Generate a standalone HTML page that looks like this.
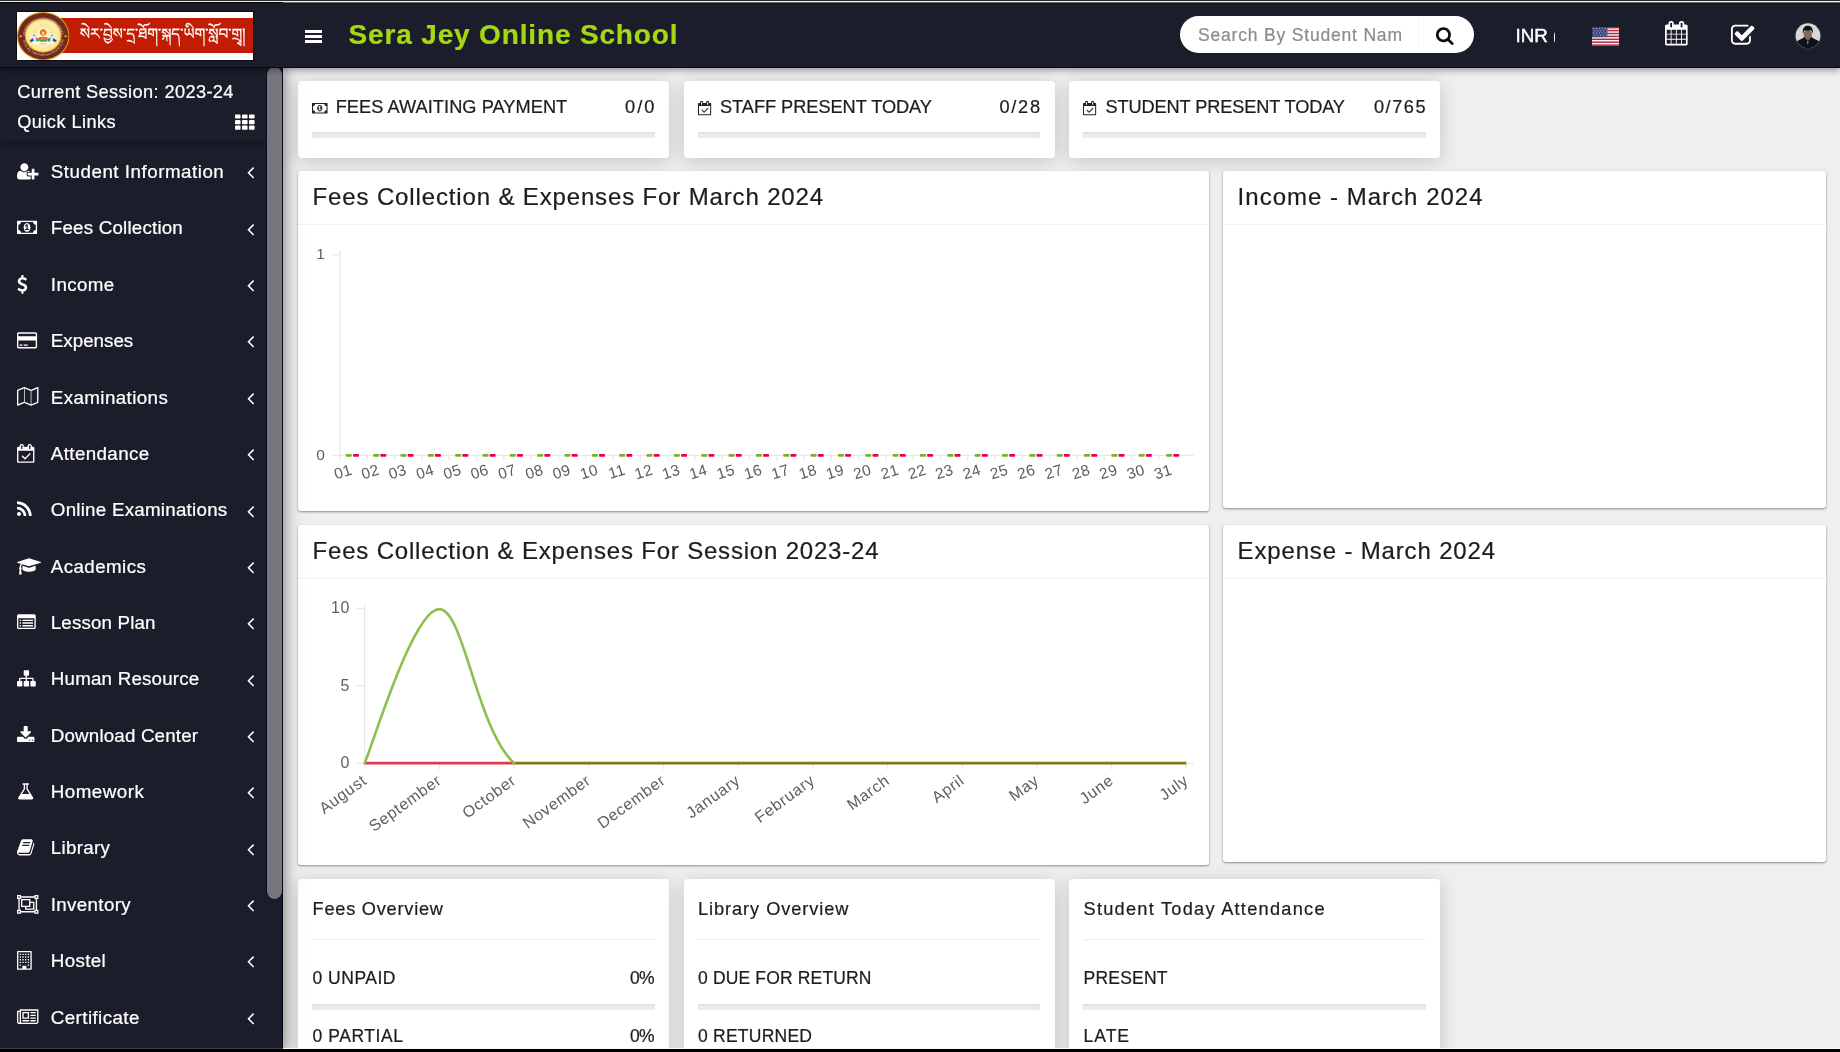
<!DOCTYPE html>
<html lang="en"><head><meta charset="utf-8"><title>Sera Jey Online School</title>
<style>
*{box-sizing:border-box}
html,body{margin:0;padding:0}
body{width:1840px;height:1052px;overflow:hidden;position:relative;background:#efefef;font-family:"Liberation Sans",sans-serif;color:#222}
.a{position:absolute}
.t{position:absolute;white-space:nowrap;line-height:1;margin:0;padding:0;-webkit-text-stroke:.22px}
.i{position:absolute;display:block;overflow:visible}
#hdr{left:0;top:0;width:1840px;height:68px;background:#1c1d2b;box-shadow:0 2px 7px rgba(0,0,0,.4),inset 0 -1px 0 #090912;z-index:5}
#side{left:0;top:68px;width:283px;height:984px;background:#1c1d2b;border-right:1px solid #060a1c;z-index:4;box-shadow:0 0 15px 1px rgba(0,0,0,.5)}
#sess{left:0;top:0;width:267px;height:73px;background:#1c1d2b;box-shadow:0 3px 5px rgba(0,0,0,.3)}
#thumb{left:267px;top:-0.6px;width:14.9px;height:831.6px;border-radius:8px;background:#76777d;box-shadow:-1px 0 0 #070b1d,1px 0 0 #070b1d}
.card{position:absolute;background:#fff;border-radius:4px}
.s1{box-shadow:0 3px 20px rgba(0,0,0,.18)}
.s2{box-shadow:0 1px 2.5px rgba(0,0,0,.42),0 0 1px rgba(0,0,0,.12)}
.pb{position:absolute;height:6px;background:#ececec;border-radius:1px;box-shadow:inset 0 1px 2px rgba(0,0,0,.08)}
.hr{position:absolute;height:1px;background:#f0f0f0}
svg text{font-family:"Liberation Sans",sans-serif}
#root{position:absolute;left:0;top:0;width:1840px;height:1052px;will-change:transform}

</style></head>
<body>
<div id="root">
<div class="a" style="left:0;top:0;width:1840px;height:1px;background:#303030;z-index:9"></div>
<div class="a" style="left:0;top:1px;width:1840px;height:1px;background:#ededed;z-index:9"></div>
<div class="a" style="left:0;top:2px;width:283px;height:1px;background:#000;z-index:9"></div>
<div class="a" style="left:283px;top:2px;width:1557px;height:1px;background:#6d6e76;z-index:9"></div>
<div class="a" style="left:283px;top:3px;width:1557px;height:1px;background:#0e0f1d;z-index:9"></div>
<div class="a" style="left:0;top:1048px;width:283px;height:1px;background:#3a3b4c;z-index:9"></div>
<div class="a" style="left:283px;top:1048px;width:1557px;height:1px;background:#fbfbfb;z-index:9"></div>
<div class="a" style="left:0;top:1049px;width:1840px;height:3px;background:#000;z-index:9"></div>
<div id="hdr" class="a">
<div class="a" style="left:16.5px;top:11.8px;width:236.7px;height:48.2px;background:#fff;overflow:hidden;box-shadow:0 0 0 1px #0c0c16">
<div class="a" style="left:30px;top:6px;width:207px;height:35px;background:#c01d04"></div>
<svg class="a" style="left:0.6px;top:-0.3px" width="52.4" height="48.4" viewBox="0 0 52 48" preserveAspectRatio="none"><defs><radialGradient id="eg" cx="50%" cy="45%" r="55%"><stop offset="0" stop-color="#fffbd0"/><stop offset="1" stop-color="#f8e68e"/></radialGradient><path id="arcb" d="M5.2 26.5 A18.9 18.9 0 0 0 42.8 26.5"/><path id="arct" d="M6.4 23 A17.7 17.7 0 0 1 41.6 23"/></defs><g transform="scale(1.0833,1)"><circle cx="24" cy="24" r="24" fill="#dd9a14"/><circle cx="24" cy="24" r="23" fill="#6e2a1f"/><circle cx="24" cy="23.4" r="16.9" fill="#e8a51c"/><circle cx="24" cy="23.4" r="15.8" fill="url(#eg)"/><text font-size="3.3" fill="#dcc0ae" font-family="'Liberation Serif',serif" font-style="italic" letter-spacing="0.05"><textPath href="#arcb" startOffset="3%">Sera Jey International Online School</textPath></text><path d="M6.4 23 A17.7 17.7 0 0 1 41.6 23" transform="translate(0,-0.6)" fill="none" stroke="#d8b9a6" stroke-width="2.2" stroke-dasharray="0.9 0.7" opacity=".75"/><path d="M1.6 24 L3.4 22.9 L5.2 24 L3.4 25.1 Z M42.8 24 L44.6 22.9 L46.4 24 L44.6 25.1 Z" fill="#e8a51c"/><path d="M17.89 20.42 L14.55 19.83 M18.43 18.78 L15.37 17.29 M19.39 17.35 L16.87 15.08 M20.71 16.24 L18.91 13.36 M22.29 15.54 L21.35 12.27 M24.00 15.30 L24.00 11.90 M25.71 15.54 L26.65 12.27 M27.29 16.24 L29.09 13.36 M28.61 17.35 L31.13 15.08 M29.57 18.78 L32.63 17.29 M30.11 20.42 L33.45 19.83 " stroke="#f5b04a" stroke-width="0.5" fill="none" opacity=".8"/><path d="M24 16.6 C25.2 17.6 27.3 18.2 27.2 20.6 C27.1 22.6 25.6 23.6 24 23.6 C22.4 23.6 20.9 22.6 20.8 20.6 C20.7 18.2 22.8 17.6 24 16.6 Z" fill="#f2701c"/><path d="M24 19 C24.8 19.8 25.5 20.3 25.4 21.4 C25.3 22.3 24.7 22.8 24 22.8 C23.3 22.8 22.7 22.3 22.6 21.4 C22.5 20.3 23.2 19.8 24 19 Z" fill="#fbd38a"/><g transform="translate(24,0) scale(1,1)"><path d="M-9.6 22.2 C-8 21.2 -6.2 21.8 -5.6 23.4 L-4.6 28.2 L-9.4 29.2 C-10.6 26.6 -10.8 24 -9.6 22.2 Z" fill="#eef1f4"/><path d="M-9.3 22.6 C-8.2 21.9 -7 22.2 -6.5 23.2 C-7.6 23.3 -8.6 23.8 -9.2 24.8 Z" fill="#8fa3b8"/><path d="M-12.6 28.8 L-9.6 25.8 L-8.6 28.6 L-10.6 29.8 Z" fill="#2a3aa6"/><path d="M-6.4 26.4 L-4.4 26 L-4 28.4 L-6.6 28.8 Z" fill="#2f8f3c"/><rect x="-7.4" y="25.2" width="1.4" height="1" fill="#d9662a"/><rect x="-5.9" y="29.3" width="1.5" height="1.2" fill="#1f2fd0"/><rect x="-10.6" y="29.6" width="2.6" height="1.1" fill="#f0b6c4"/></g><g transform="translate(24,0) scale(-1,1)"><path d="M-9.6 22.2 C-8 21.2 -6.2 21.8 -5.6 23.4 L-4.6 28.2 L-9.4 29.2 C-10.6 26.6 -10.8 24 -9.6 22.2 Z" fill="#eef1f4"/><path d="M-9.3 22.6 C-8.2 21.9 -7 22.2 -6.5 23.2 C-7.6 23.3 -8.6 23.8 -9.2 24.8 Z" fill="#8fa3b8"/><path d="M-12.6 28.8 L-9.6 25.8 L-8.6 28.6 L-10.6 29.8 Z" fill="#2a3aa6"/><path d="M-6.4 26.4 L-4.4 26 L-4 28.4 L-6.6 28.8 Z" fill="#2f8f3c"/><rect x="-7.4" y="25.2" width="1.4" height="1" fill="#d9662a"/><rect x="-5.9" y="29.3" width="1.5" height="1.2" fill="#1f2fd0"/><rect x="-10.6" y="29.6" width="2.6" height="1.1" fill="#f0b6c4"/></g><ellipse cx="24" cy="26.5" rx="4.3" ry="1.9" fill="#e5533a"/><ellipse cx="24" cy="26.5" rx="2.8" ry="0.9" fill="#f08a6c"/><path d="M20 28 H28 L27 29.4 H21 Z" fill="#2f8f3c"/><path d="M13.6 29.4 H34.4 L33.4 31.4 C30 32.6 18 32.6 14.6 31.4 Z" fill="#f7f7f7"/><rect x="21.6" y="31" width="4.8" height="1" fill="#f3a7b7"/></g></svg>
<span class="t" style="left:63.6px;top:7.2px;font-size:15.2px;color:#fff;font-family:'Liberation Sans','Noto Serif Tibetan','Jomolhari',serif;line-height:30px">སེར་བྱེས་དྲ་ཐོག་སྐད་ཡིག་སློབ་གྲྭ།</span>
</div>
<div class="a" style="left:304.5px;top:30.3px;width:17.5px;height:2.8px;background:#fff"></div>
<div class="a" style="left:304.5px;top:35.2px;width:17.5px;height:2.8px;background:#fff"></div>
<div class="a" style="left:304.5px;top:40.2px;width:17.5px;height:2.8px;background:#fff"></div>
<span class="t" style="left:348.50px;top:20.79px;font-size:28px;color:#a4d813;letter-spacing:0.846px;font-weight:700;">Sera Jey Online School</span>
<div class="a" style="left:1180px;top:15.8px;width:293.5px;height:37.5px;border-radius:19px;background:#fff"></div>
<div class="a" style="left:1417.5px;top:17px;width:1px;height:35px;background:#f7f7f7"></div>
<span class="t" style="left:1198.00px;top:27.18px;font-size:17.5px;color:#8c8c8c;letter-spacing:0.813px;">Search By Student Nam</span>
<svg class="i" style="width:17.64px;height:19.00px;left:1435.7px;top:25.9px" viewBox="0 -1536 1664 1792"><path fill="#0b0b0b" transform="scale(1,-1)" d="M1152 704C1152 457 951 256 704 256C457 256 256 457 256 704C256 951 457 1152 704 1152C951 1152 1152 951 1152 704ZM1664 -128C1664 -94 1650 -61 1627 -38L1284 305C1365 422 1408 562 1408 704C1408 1093 1093 1408 704 1408C315 1408 0 1093 0 704C0 315 315 0 704 0C846 0 986 43 1103 124L1446 -218C1469 -242 1502 -256 1536 -256C1606 -256 1664 -198 1664 -128Z"/></svg>
<div class="a" style="left:1515.5px;top:20px;width:39.8px;height:30px;overflow:hidden"><span class="t" style="left:0;top:7.32px;font-size:18.75px;color:#fff;-webkit-text-stroke:.45px">INR (</span></div>
<svg class="a" style="left:1592.1px;top:26.9px" width="27" height="18.8" viewBox="0 0 27 18.5" preserveAspectRatio="none"><rect width="27" height="18.5" fill="#f4f4f6"/><rect x="0" y="0.000" width="27" height="1.423" fill="#b02a3c"/><rect x="0" y="2.846" width="27" height="1.423" fill="#b02a3c"/><rect x="0" y="5.692" width="27" height="1.423" fill="#b02a3c"/><rect x="0" y="8.538" width="27" height="1.423" fill="#b02a3c"/><rect x="0" y="11.385" width="27" height="1.423" fill="#b02a3c"/><rect x="0" y="14.231" width="27" height="1.423" fill="#b02a3c"/><rect x="0" y="17.077" width="27" height="1.423" fill="#b02a3c"/><rect width="15.4" height="9.96" fill="#3b4478"/><rect x="1.0" y="1.0" width="1.2" height="1" fill="#a9aed0"/><rect x="3.9" y="1.0" width="1.2" height="1" fill="#a9aed0"/><rect x="6.8" y="1.0" width="1.2" height="1" fill="#a9aed0"/><rect x="9.7" y="1.0" width="1.2" height="1" fill="#a9aed0"/><rect x="12.6" y="1.0" width="1.2" height="1" fill="#a9aed0"/><rect x="2.2" y="3.2" width="1.2" height="1" fill="#a9aed0"/><rect x="5.1" y="3.2" width="1.2" height="1" fill="#a9aed0"/><rect x="8.0" y="3.2" width="1.2" height="1" fill="#a9aed0"/><rect x="10.9" y="3.2" width="1.2" height="1" fill="#a9aed0"/><rect x="13.8" y="3.2" width="1.2" height="1" fill="#a9aed0"/><rect x="1.0" y="5.4" width="1.2" height="1" fill="#a9aed0"/><rect x="3.9" y="5.4" width="1.2" height="1" fill="#a9aed0"/><rect x="6.8" y="5.4" width="1.2" height="1" fill="#a9aed0"/><rect x="9.7" y="5.4" width="1.2" height="1" fill="#a9aed0"/><rect x="12.6" y="5.4" width="1.2" height="1" fill="#a9aed0"/><rect x="2.2" y="7.6" width="1.2" height="1" fill="#a9aed0"/><rect x="5.1" y="7.6" width="1.2" height="1" fill="#a9aed0"/><rect x="8.0" y="7.6" width="1.2" height="1" fill="#a9aed0"/><rect x="10.9" y="7.6" width="1.2" height="1" fill="#a9aed0"/><rect x="13.8" y="7.6" width="1.2" height="1" fill="#a9aed0"/></svg>
<svg class="i" style="width:22.66px;height:24.40px;left:1665.2px;top:21.4px" viewBox="0 -1536 1664 1792"><path fill="#fff" transform="scale(1,-1)" d="M128 -128V160H416V-128ZM480 -128V160H800V-128ZM128 224V544H416V224ZM480 224V544H800V224ZM128 608V896H416V608ZM864 -128V160H1184V-128ZM480 608V896H800V608ZM1248 -128V160H1536V-128ZM864 224V544H1184V224ZM512 1088C512 1071 497 1056 480 1056H416C399 1056 384 1071 384 1088V1376C384 1393 399 1408 416 1408H480C497 1408 512 1393 512 1376V1088ZM1248 224V544H1536V224ZM864 608V896H1184V608ZM1248 608V896H1536V608ZM1280 1088C1280 1071 1265 1056 1248 1056H1184C1167 1056 1152 1071 1152 1088V1376C1152 1393 1167 1408 1184 1408H1248C1265 1408 1280 1393 1280 1376V1088ZM1664 1152C1664 1222 1606 1280 1536 1280H1408V1376C1408 1464 1336 1536 1248 1536H1184C1096 1536 1024 1464 1024 1376V1280H640V1376C640 1464 568 1536 480 1536H416C328 1536 256 1464 256 1376V1280H128C58 1280 0 1222 0 1152V-128C0 -198 58 -256 128 -256H1536C1606 -256 1664 -198 1664 -128Z"/></svg>
<svg class="i" style="width:23.49px;height:25.30px;left:1731.3px;top:23.3px" viewBox="0 -1536 1664 1792"><path fill="#fff" transform="scale(1,-1)" d="M1408 606C1408 619 1400 630 1388 635C1384 637 1380 638 1376 638C1368 638 1360 635 1353 628L1289 564C1283 558 1280 550 1280 542V288C1280 200 1208 128 1120 128H288C200 128 128 200 128 288V1120C128 1208 200 1280 288 1280H1120C1135 1280 1150 1278 1165 1274C1168 1273 1171 1272 1174 1272C1182 1272 1191 1276 1197 1282L1246 1331C1254 1339 1257 1349 1255 1360C1253 1370 1246 1379 1237 1383C1200 1400 1160 1408 1120 1408H288C129 1408 0 1279 0 1120V288C0 129 129 0 288 0H1120C1279 0 1408 129 1408 288ZM1639 1095C1671 1127 1671 1177 1639 1209L1529 1319C1497 1351 1447 1351 1415 1319L768 672L505 935C473 967 423 967 391 935L281 825C249 793 249 743 281 711L711 281C743 249 793 249 825 281L1639 1095Z"/></svg>
<svg class="a" style="left:1794.2px;top:21.6px" width="28" height="28" viewBox="0 0 28 28"><defs><clipPath id="av"><circle cx="14" cy="13.7" r="12.4"/></clipPath></defs><circle cx="14" cy="13.7" r="13.8" fill="#2a2a2d"/><g clip-path="url(#av)"><rect width="28" height="28" fill="#d5d7da"/><path d="M0 28 V21 C2.5 18.8 6 17.8 9.6 15.4 L11.4 14.6 H16.4 L18.2 15.4 C21.8 17.8 25.5 18.8 28 21 V28 Z" fill="#0e1115"/><path d="M11.6 14.2 H16.2 V17 L13.9 18.6 L11.6 17 Z" fill="#7a5d50"/><ellipse cx="13.8" cy="12.3" rx="4.15" ry="4.9" fill="#84675a"/><path d="M9.0 11.8 C6.6 1.4 20.6 0.8 18.8 11.6 C18.3 9.6 17.6 8.6 16.4 8.1 C14.4 8.9 11.4 8.6 10.4 8.3 C9.7 9.2 9.4 10.2 9.2 11.6 Z" fill="#101012"/><rect x="13.1" y="18.6" width="1.3" height="3.4" fill="#6f8494"/></g></svg>
</div>
<div id="side" class="a">
<div id="sess" class="a"></div>
<span class="t" style="left:17.20px;top:14.79px;font-size:18.2px;color:#fff;letter-spacing:0.393px;">Current Session: 2023-24</span>
<span class="t" style="left:17.20px;top:44.79px;font-size:18.2px;color:#fff;letter-spacing:0.448px;">Quick Links</span>
<svg class="i" style="width:19.60px;height:19.60px;left:235.2px;top:44.8px" viewBox="0 -1536 1792 1792"><path fill="#fff" transform="scale(1,-1)" d="M512 288C512 341 469 384 416 384H96C43 384 0 341 0 288V96C0 43 43 0 96 0H416C469 0 512 43 512 96ZM512 800C512 853 469 896 416 896H96C43 896 0 853 0 800V608C0 555 43 512 96 512H416C469 512 512 555 512 608ZM1152 288C1152 341 1109 384 1056 384H736C683 384 640 341 640 288V96C640 43 683 0 736 0H1056C1109 0 1152 43 1152 96ZM512 1312C512 1365 469 1408 416 1408H96C43 1408 0 1365 0 1312V1120C0 1067 43 1024 96 1024H416C469 1024 512 1067 512 1120ZM1152 800C1152 853 1109 896 1056 896H736C683 896 640 853 640 800V608C640 555 683 512 736 512H1056C1109 512 1152 555 1152 608ZM1792 288C1792 341 1749 384 1696 384H1376C1323 384 1280 341 1280 288V96C1280 43 1323 0 1376 0H1696C1749 0 1792 43 1792 96ZM1152 1312C1152 1365 1109 1408 1056 1408H736C683 1408 640 1365 640 1312V1120C640 1067 683 1024 736 1024H1056C1109 1024 1152 1067 1152 1120ZM1792 800C1792 853 1749 896 1696 896H1376C1323 896 1280 853 1280 800V608C1280 555 1323 512 1376 512H1696C1749 512 1792 555 1792 608ZM1792 1312C1792 1365 1749 1408 1696 1408H1376C1323 1408 1280 1365 1280 1312V1120C1280 1067 1323 1024 1376 1024H1696C1749 1024 1792 1067 1792 1120Z"/></svg>
<span class="t" style="left:50.80px;top:95.02px;font-size:18.75px;color:#fff;letter-spacing:0.519px;">Student Information</span>
<svg class="i" style="width:21.43px;height:18.75px;left:16.7px;top:94.00px" viewBox="0 -1536 2048 1792"><path fill="#fff" transform="scale(1,-1)" d="M704 640C916 640 1088 812 1088 1024C1088 1236 916 1408 704 1408C492 1408 320 1236 320 1024C320 812 492 640 704 640ZM1664 512V864C1664 881 1649 896 1632 896H1440C1423 896 1408 881 1408 864V512H1056C1039 512 1024 497 1024 480V288C1024 271 1039 256 1056 256H1408V-96C1408 -113 1423 -128 1440 -128H1632C1649 -128 1664 -113 1664 -96V256H2016C2033 256 2048 271 2048 288V480C2048 497 2033 512 2016 512ZM928 288V480C928 550 986 608 1056 608H1279C1222 672 1147 704 1062 704C1046 704 1035 697 1023 687C925 612 830 565 704 565C578 565 483 612 385 687C373 697 362 704 346 704C53 704 0 357 0 131C0 -32 107 -128 267 -128H1141C1201 -128 1263 -114 1312 -78V160H1056C986 160 928 218 928 288Z"/></svg>
<svg class="i" style="width:7.21px;height:20.20px;left:247.3px;top:94.30px" viewBox="0 -1536 640 1792"><path fill="#fff" transform="scale(1,-1)" d="M627 992C627 1001 623 1009 617 1015L567 1065C561 1071 552 1075 544 1075C536 1075 527 1071 521 1065L55 599C49 593 45 584 45 576C45 568 49 559 55 553L521 87C527 81 536 77 544 77C552 77 561 81 567 87L617 137C623 143 627 152 627 160C627 168 623 177 617 183L224 576L617 969C623 975 627 984 627 992Z"/></svg>
<span class="t" style="left:50.80px;top:151.39px;font-size:18.75px;color:#fff;letter-spacing:0.198px;">Fees Collection</span>
<svg class="i" style="width:20.09px;height:18.75px;left:16.7px;top:150.37px" viewBox="0 -1536 1920 1792"><path fill="#fff" transform="scale(1,-1)" d="M768 384V480H896V768H894C878 743 863 732 839 711L762 791L910 928H1024V480H1152V384ZM1280 640C1280 822 1170 1056 960 1056C750 1056 640 822 640 640C640 458 750 224 960 224C1170 224 1280 458 1280 640ZM1792 384C1651 384 1536 269 1536 128H384C384 269 269 384 128 384V896C269 896 384 1011 384 1152H1536C1536 1011 1651 896 1792 896V384ZM1920 1216C1920 1251 1891 1280 1856 1280H64C29 1280 0 1251 0 1216V64C0 29 29 0 64 0H1856C1891 0 1920 29 1920 64Z"/></svg>
<svg class="i" style="width:7.21px;height:20.20px;left:247.3px;top:150.67px" viewBox="0 -1536 640 1792"><path fill="#fff" transform="scale(1,-1)" d="M627 992C627 1001 623 1009 617 1015L567 1065C561 1071 552 1075 544 1075C536 1075 527 1071 521 1065L55 599C49 593 45 584 45 576C45 568 49 559 55 553L521 87C527 81 536 77 544 77C552 77 561 81 567 87L617 137C623 143 627 152 627 160C627 168 623 177 617 183L224 576L617 969C623 975 627 984 627 992Z"/></svg>
<span class="t" style="left:50.80px;top:207.76px;font-size:18.75px;color:#fff;letter-spacing:0.380px;">Income</span>
<svg class="i" style="width:10.71px;height:18.75px;left:16.7px;top:206.74px" viewBox="0 -1536 1024 1792"><path fill="#fff" transform="scale(1,-1)" d="M978 351C978 592 770 673 586 744C444 799 322 846 322 952C322 1043 410 1106 537 1106C687 1106 808 999 809 998C817 992 826 989 836 991C846 992 854 998 859 1007L940 1153C947 1165 945 1180 935 1191C931 1195 823 1305 620 1328V1504C620 1522 606 1536 588 1536H453C436 1536 421 1522 421 1504V1324C212 1284 68 1132 68 948C68 697 292 607 472 536C607 482 725 435 725 339C725 226 619 174 521 174C344 174 204 308 202 309C196 316 187 319 178 318C169 317 160 313 155 306L52 171C43 159 44 142 54 130C59 124 187 -16 421 -49V-224C421 -242 436 -256 453 -256H588C606 -256 620 -242 620 -224V-49C832 -14 978 147 978 351Z"/></svg>
<svg class="i" style="width:7.21px;height:20.20px;left:247.3px;top:207.04px" viewBox="0 -1536 640 1792"><path fill="#fff" transform="scale(1,-1)" d="M627 992C627 1001 623 1009 617 1015L567 1065C561 1071 552 1075 544 1075C536 1075 527 1071 521 1065L55 599C49 593 45 584 45 576C45 568 49 559 55 553L521 87C527 81 536 77 544 77C552 77 561 81 567 87L617 137C623 143 627 152 627 160C627 168 623 177 617 183L224 576L617 969C623 975 627 984 627 992Z"/></svg>
<span class="t" style="left:50.80px;top:264.13px;font-size:18.75px;color:#fff;letter-spacing:0.008px;">Expenses</span>
<svg class="i" style="width:20.09px;height:18.75px;left:16.7px;top:263.11px" viewBox="0 -1536 1920 1792"><path fill="#fff" transform="scale(1,-1)" d="M1760 1408H160C72 1408 0 1336 0 1248V32C0 -56 72 -128 160 -128H1760C1848 -128 1920 -56 1920 32V1248C1920 1336 1848 1408 1760 1408ZM160 1280H1760C1777 1280 1792 1265 1792 1248V1024H128V1248C128 1265 143 1280 160 1280ZM1760 0H160C143 0 128 15 128 32V640H1792V32C1792 15 1777 0 1760 0ZM256 128H512V256H256ZM640 128H1024V256H640Z"/></svg>
<svg class="i" style="width:7.21px;height:20.20px;left:247.3px;top:263.41px" viewBox="0 -1536 640 1792"><path fill="#fff" transform="scale(1,-1)" d="M627 992C627 1001 623 1009 617 1015L567 1065C561 1071 552 1075 544 1075C536 1075 527 1071 521 1065L55 599C49 593 45 584 45 576C45 568 49 559 55 553L521 87C527 81 536 77 544 77C552 77 561 81 567 87L617 137C623 143 627 152 627 160C627 168 623 177 617 183L224 576L617 969C623 975 627 984 627 992Z"/></svg>
<span class="t" style="left:50.80px;top:320.50px;font-size:18.75px;color:#fff;letter-spacing:0.403px;">Examinations</span>
<svg class="i" style="width:21.43px;height:18.75px;left:16.7px;top:319.48px" viewBox="0 -1536 2048 1792"><path fill="#fff" transform="scale(1,-1)" d="M2020 1525C2002 1537 1980 1539 1960 1531L1344 1285L728 1531C712 1538 696 1538 680 1531L40 1275C16 1266 0 1242 0 1216V-192C0 -213 11 -233 28 -245C39 -252 51 -256 64 -256C72 -256 80 -255 88 -251L704 -5L1320 -251C1336 -258 1352 -258 1368 -251L2008 5C2032 14 2048 38 2048 64V1472C2048 1493 2037 1513 2020 1525ZM736 1390 1312 1160V-110L736 120ZM128 1173 672 1390V120L128 -97ZM1920 107 1376 -110V1160L1920 1377Z"/></svg>
<svg class="i" style="width:7.21px;height:20.20px;left:247.3px;top:319.78px" viewBox="0 -1536 640 1792"><path fill="#fff" transform="scale(1,-1)" d="M627 992C627 1001 623 1009 617 1015L567 1065C561 1071 552 1075 544 1075C536 1075 527 1071 521 1065L55 599C49 593 45 584 45 576C45 568 49 559 55 553L521 87C527 81 536 77 544 77C552 77 561 81 567 87L617 137C623 143 627 152 627 160C627 168 623 177 617 183L224 576L617 969C623 975 627 984 627 992Z"/></svg>
<span class="t" style="left:50.80px;top:376.87px;font-size:18.75px;color:#fff;letter-spacing:0.392px;">Attendance</span>
<svg class="i" style="width:18.75px;height:18.75px;left:16.7px;top:375.85px" viewBox="0 -1536 1792 1792"><path fill="#fff" transform="scale(1,-1)" d="M1303 572C1315 585 1315 605 1303 617L1257 663C1245 675 1225 675 1212 663L768 219L548 439C535 451 515 451 503 439L457 393C445 381 445 361 457 348L745 60C758 48 778 48 791 60L1303 572ZM128 -128V896H1536V-128ZM512 1088C512 1070 498 1056 480 1056H416C398 1056 384 1070 384 1088V1376C384 1394 398 1408 416 1408H480C498 1408 512 1394 512 1376V1088ZM1280 1088C1280 1070 1266 1056 1248 1056H1184C1166 1056 1152 1070 1152 1088V1376C1152 1394 1166 1408 1184 1408H1248C1266 1408 1280 1394 1280 1376V1088ZM1664 1152C1664 1222 1606 1280 1536 1280H1408V1376C1408 1464 1336 1536 1248 1536H1184C1096 1536 1024 1464 1024 1376V1280H640V1376C640 1464 568 1536 480 1536H416C328 1536 256 1464 256 1376V1280H128C58 1280 0 1222 0 1152V-128C0 -198 58 -256 128 -256H1536C1606 -256 1664 -198 1664 -128Z"/></svg>
<svg class="i" style="width:7.21px;height:20.20px;left:247.3px;top:376.15px" viewBox="0 -1536 640 1792"><path fill="#fff" transform="scale(1,-1)" d="M627 992C627 1001 623 1009 617 1015L567 1065C561 1071 552 1075 544 1075C536 1075 527 1071 521 1065L55 599C49 593 45 584 45 576C45 568 49 559 55 553L521 87C527 81 536 77 544 77C552 77 561 81 567 87L617 137C623 143 627 152 627 160C627 168 623 177 617 183L224 576L617 969C623 975 627 984 627 992Z"/></svg>
<span class="t" style="left:50.80px;top:433.24px;font-size:18.75px;color:#fff;letter-spacing:0.246px;">Online Examinations</span>
<svg class="i" style="width:14.73px;height:18.75px;left:16.7px;top:432.22px" viewBox="0 -1536 1408 1792"><path fill="#fff" transform="scale(1,-1)" d="M384 192C384 298 298 384 192 384C86 384 0 298 0 192C0 86 86 0 192 0C298 0 384 86 384 192ZM896 69C879 282 786 483 634 634C483 786 282 879 69 896C67 896 66 896 64 896C48 896 32 890 21 879C7 867 0 850 0 832V697C0 664 25 637 58 634C363 605 605 363 634 58C637 25 664 0 697 0H832C850 0 867 7 879 21C891 34 897 51 896 69ZM1408 67C1390 417 1243 746 994 994C746 1243 417 1390 67 1408C66 1408 65 1408 64 1408C48 1408 32 1402 20 1390C7 1378 0 1362 0 1344V1201C0 1168 26 1140 60 1138C641 1104 1104 641 1137 60C1139 26 1167 0 1201 0H1344C1362 0 1378 7 1390 20C1403 33 1409 50 1408 67Z"/></svg>
<svg class="i" style="width:7.21px;height:20.20px;left:247.3px;top:432.52px" viewBox="0 -1536 640 1792"><path fill="#fff" transform="scale(1,-1)" d="M627 992C627 1001 623 1009 617 1015L567 1065C561 1071 552 1075 544 1075C536 1075 527 1071 521 1065L55 599C49 593 45 584 45 576C45 568 49 559 55 553L521 87C527 81 536 77 544 77C552 77 561 81 567 87L617 137C623 143 627 152 627 160C627 168 623 177 617 183L224 576L617 969C623 975 627 984 627 992Z"/></svg>
<span class="t" style="left:50.80px;top:489.61px;font-size:18.75px;color:#fff;letter-spacing:0.412px;">Academics</span>
<svg class="i" style="width:24.11px;height:18.75px;left:16.7px;top:488.59px" viewBox="0 -1536 2304 1792"><path fill="#fff" transform="scale(1,-1)" d="M1774 700 1200 519C1184 514 1168 512 1152 512C1136 512 1120 514 1104 519L530 700L512 384C504 243 799 128 1152 128C1505 128 1800 243 1792 384ZM2304 1024C2304 1038 2295 1050 2282 1055L1162 1407C1158 1408 1155 1408 1152 1408C1149 1408 1146 1408 1142 1407L22 1055C9 1050 0 1038 0 1024C0 1010 9 998 22 993L355 889C293 802 263 676 257 559C219 537 192 496 192 448C192 403 215 364 250 341L192 -92C191 -101 194 -110 200 -117C206 -124 215 -128 224 -128H416C425 -128 434 -124 440 -117C446 -110 449 -101 448 -92L390 341C425 364 448 403 448 448C448 495 423 535 385 557C393 692 433 802 490 847L1142 641C1146 640 1149 640 1152 640C1155 640 1158 640 1162 641L2282 993C2295 998 2304 1010 2304 1024Z"/></svg>
<svg class="i" style="width:7.21px;height:20.20px;left:247.3px;top:488.89px" viewBox="0 -1536 640 1792"><path fill="#fff" transform="scale(1,-1)" d="M627 992C627 1001 623 1009 617 1015L567 1065C561 1071 552 1075 544 1075C536 1075 527 1071 521 1065L55 599C49 593 45 584 45 576C45 568 49 559 55 553L521 87C527 81 536 77 544 77C552 77 561 81 567 87L617 137C623 143 627 152 627 160C627 168 623 177 617 183L224 576L617 969C623 975 627 984 627 992Z"/></svg>
<span class="t" style="left:50.80px;top:545.98px;font-size:18.75px;color:#fff;letter-spacing:0.150px;">Lesson Plan</span>
<svg class="i" style="width:18.75px;height:18.75px;left:16.7px;top:544.96px" viewBox="0 -1536 1792 1792"><path fill="#fff" transform="scale(1,-1)" d="M384 352C384 369 369 384 352 384H288C271 384 256 369 256 352V288C256 271 271 256 288 256H352C369 256 384 271 384 288ZM384 608C384 625 369 640 352 640H288C271 640 256 625 256 608V544C256 527 271 512 288 512H352C369 512 384 527 384 544ZM384 864C384 881 369 896 352 896H288C271 896 256 881 256 864V800C256 783 271 768 288 768H352C369 768 384 783 384 800ZM1536 352C1536 369 1521 384 1504 384H544C527 384 512 369 512 352V288C512 271 527 256 544 256H1504C1521 256 1536 271 1536 288ZM1536 608C1536 625 1521 640 1504 640H544C527 640 512 625 512 608V544C512 527 527 512 544 512H1504C1521 512 1536 527 1536 544ZM1536 864C1536 881 1521 896 1504 896H544C527 896 512 881 512 864V800C512 783 527 768 544 768H1504C1521 768 1536 783 1536 800ZM1664 160C1664 143 1649 128 1632 128H160C143 128 128 143 128 160V992C128 1009 143 1024 160 1024H1632C1649 1024 1664 1009 1664 992V160ZM1792 1248C1792 1336 1720 1408 1632 1408H160C72 1408 0 1336 0 1248V160C0 72 72 0 160 0H1632C1720 0 1792 72 1792 160Z"/></svg>
<svg class="i" style="width:7.21px;height:20.20px;left:247.3px;top:545.26px" viewBox="0 -1536 640 1792"><path fill="#fff" transform="scale(1,-1)" d="M627 992C627 1001 623 1009 617 1015L567 1065C561 1071 552 1075 544 1075C536 1075 527 1071 521 1065L55 599C49 593 45 584 45 576C45 568 49 559 55 553L521 87C527 81 536 77 544 77C552 77 561 81 567 87L617 137C623 143 627 152 627 160C627 168 623 177 617 183L224 576L617 969C623 975 627 984 627 992Z"/></svg>
<span class="t" style="left:50.80px;top:602.35px;font-size:18.75px;color:#fff;letter-spacing:0.200px;">Human Resource</span>
<svg class="i" style="width:18.75px;height:18.75px;left:16.7px;top:601.33px" viewBox="0 -1536 1792 1792"><path fill="#fff" transform="scale(1,-1)" d="M1792 288C1792 341 1749 384 1696 384H1600V576C1600 646 1542 704 1472 704H960V896H1056C1109 896 1152 939 1152 992V1312C1152 1365 1109 1408 1056 1408H736C683 1408 640 1365 640 1312V992C640 939 683 896 736 896H832V704H320C250 704 192 646 192 576V384H96C43 384 0 341 0 288V-32C0 -85 43 -128 96 -128H416C469 -128 512 -85 512 -32V288C512 341 469 384 416 384H320V576H832V384H736C683 384 640 341 640 288V-32C640 -85 683 -128 736 -128H1056C1109 -128 1152 -85 1152 -32V288C1152 341 1109 384 1056 384H960V576H1472V384H1376C1323 384 1280 341 1280 288V-32C1280 -85 1323 -128 1376 -128H1696C1749 -128 1792 -85 1792 -32Z"/></svg>
<svg class="i" style="width:7.21px;height:20.20px;left:247.3px;top:601.63px" viewBox="0 -1536 640 1792"><path fill="#fff" transform="scale(1,-1)" d="M627 992C627 1001 623 1009 617 1015L567 1065C561 1071 552 1075 544 1075C536 1075 527 1071 521 1065L55 599C49 593 45 584 45 576C45 568 49 559 55 553L521 87C527 81 536 77 544 77C552 77 561 81 567 87L617 137C623 143 627 152 627 160C627 168 623 177 617 183L224 576L617 969C623 975 627 984 627 992Z"/></svg>
<span class="t" style="left:50.80px;top:658.72px;font-size:18.75px;color:#fff;letter-spacing:0.166px;">Download Center</span>
<svg class="i" style="width:17.41px;height:18.75px;left:16.7px;top:657.70px" viewBox="0 -1536 1664 1792"><path fill="#fff" transform="scale(1,-1)" d="M1280 192C1280 157 1251 128 1216 128C1181 128 1152 157 1152 192C1152 227 1181 256 1216 256C1251 256 1280 227 1280 192ZM1536 192C1536 157 1507 128 1472 128C1437 128 1408 157 1408 192C1408 227 1437 256 1472 256C1507 256 1536 227 1536 192ZM1664 416C1664 469 1621 512 1568 512H1104L968 376C931 340 883 320 832 320C781 320 733 340 696 376L561 512H96C43 512 0 469 0 416V96C0 43 43 0 96 0H1568C1621 0 1664 43 1664 96ZM1339 985C1329 1008 1306 1024 1280 1024H1024V1472C1024 1507 995 1536 960 1536H704C669 1536 640 1507 640 1472V1024H384C358 1024 335 1008 325 985C315 961 320 933 339 915L787 467C799 454 816 448 832 448C848 448 865 454 877 467L1325 915C1344 933 1349 961 1339 985Z"/></svg>
<svg class="i" style="width:7.21px;height:20.20px;left:247.3px;top:658.00px" viewBox="0 -1536 640 1792"><path fill="#fff" transform="scale(1,-1)" d="M627 992C627 1001 623 1009 617 1015L567 1065C561 1071 552 1075 544 1075C536 1075 527 1071 521 1065L55 599C49 593 45 584 45 576C45 568 49 559 55 553L521 87C527 81 536 77 544 77C552 77 561 81 567 87L617 137C623 143 627 152 627 160C627 168 623 177 617 183L224 576L617 969C623 975 627 984 627 992Z"/></svg>
<span class="t" style="left:50.80px;top:715.09px;font-size:18.75px;color:#fff;letter-spacing:0.484px;">Homework</span>
<svg class="i" style="width:17.41px;height:18.75px;left:16.7px;top:714.07px" viewBox="0 -1536 1664 1792"><path fill="#fff" transform="scale(1,-1)" d="M1527 88 1024 881V1280H1088C1123 1280 1152 1309 1152 1344C1152 1379 1123 1408 1088 1408H576C541 1408 512 1379 512 1344C512 1309 541 1280 576 1280H640V881L137 88C62 -31 115 -128 256 -128H1408C1549 -128 1602 -31 1527 88ZM748 813 768 844V881V1280H896V881V844L916 813L1188 384H476Z"/></svg>
<svg class="i" style="width:7.21px;height:20.20px;left:247.3px;top:714.37px" viewBox="0 -1536 640 1792"><path fill="#fff" transform="scale(1,-1)" d="M627 992C627 1001 623 1009 617 1015L567 1065C561 1071 552 1075 544 1075C536 1075 527 1071 521 1065L55 599C49 593 45 584 45 576C45 568 49 559 55 553L521 87C527 81 536 77 544 77C552 77 561 81 567 87L617 137C623 143 627 152 627 160C627 168 623 177 617 183L224 576L617 969C623 975 627 984 627 992Z"/></svg>
<span class="t" style="left:50.80px;top:771.46px;font-size:18.75px;color:#fff;letter-spacing:0.281px;">Library</span>
<svg class="i" style="width:17.41px;height:18.75px;left:16.7px;top:770.44px" viewBox="0 -1536 1664 1792"><path fill="#fff" transform="scale(1,-1)" d="M1639 1058C1624 1078 1603 1092 1580 1101C1581 1083 1581 1063 1575 1044L1275 57C1264 21 1221 0 1184 0H261C206 0 137 12 117 70C109 92 110 101 118 113C127 125 143 128 156 128H1025C1152 128 1178 162 1225 316L1499 1222C1513 1269 1507 1316 1481 1352C1456 1387 1414 1408 1367 1408H606C589 1408 572 1403 555 1399L556 1402C429 1438 421 1301 379 1239C363 1216 339 1196 335 1177C332 1159 342 1142 340 1125C334 1072 294 977 270 944C255 924 233 914 226 891C220 875 230 852 228 831C223 784 188 695 161 649C151 631 132 617 127 598C122 581 132 559 127 540C116 488 82 407 52 357C36 330 15 313 11 289C9 277 18 264 17 248C16 224 12 204 10 184C-4 146 -4 102 12 57C49 -47 158 -128 260 -128H1183C1269 -128 1357 -62 1382 23L1657 929C1671 975 1664 1022 1639 1058ZM575 1056 596 1120C602 1138 621 1152 638 1152H1246C1264 1152 1274 1138 1268 1120L1247 1056C1241 1038 1222 1024 1205 1024H597C579 1024 569 1038 575 1056ZM492 800 513 864C519 882 538 896 555 896H1163C1181 896 1191 882 1185 864L1164 800C1158 782 1139 768 1122 768H514C496 768 486 782 492 800Z"/></svg>
<svg class="i" style="width:7.21px;height:20.20px;left:247.3px;top:770.74px" viewBox="0 -1536 640 1792"><path fill="#fff" transform="scale(1,-1)" d="M627 992C627 1001 623 1009 617 1015L567 1065C561 1071 552 1075 544 1075C536 1075 527 1071 521 1065L55 599C49 593 45 584 45 576C45 568 49 559 55 553L521 87C527 81 536 77 544 77C552 77 561 81 567 87L617 137C623 143 627 152 627 160C627 168 623 177 617 183L224 576L617 969C623 975 627 984 627 992Z"/></svg>
<span class="t" style="left:50.80px;top:827.83px;font-size:18.75px;color:#fff;letter-spacing:0.334px;">Inventory</span>
<svg class="i" style="width:21.43px;height:18.75px;left:16.7px;top:826.81px" viewBox="0 -1536 2048 1792"><path fill="#fff" transform="scale(1,-1)" d="M2048 1152V1536H1664V1408H384V1536H0V1152H128V128H0V-256H384V-128H1664V-256H2048V128H1920V1152ZM1792 1408H1920V1280H1792ZM128 1408H256V1280H128ZM256 -128H128V0H256ZM1664 0H384V128H256V1152H384V1280H1664V1152H1792V128H1664ZM1920 -128H1792V0H1920ZM1280 896V1152H384V384H768V128H1664V896ZM512 512V1024H1152V512ZM1536 256H896V384H1280V768H1536Z"/></svg>
<svg class="i" style="width:7.21px;height:20.20px;left:247.3px;top:827.11px" viewBox="0 -1536 640 1792"><path fill="#fff" transform="scale(1,-1)" d="M627 992C627 1001 623 1009 617 1015L567 1065C561 1071 552 1075 544 1075C536 1075 527 1071 521 1065L55 599C49 593 45 584 45 576C45 568 49 559 55 553L521 87C527 81 536 77 544 77C552 77 561 81 567 87L617 137C623 143 627 152 627 160C627 168 623 177 617 183L224 576L617 969C623 975 627 984 627 992Z"/></svg>
<span class="t" style="left:50.80px;top:884.20px;font-size:18.75px;color:#fff;letter-spacing:0.369px;">Hostel</span>
<svg class="i" style="width:14.73px;height:18.75px;left:16.7px;top:883.18px" viewBox="0 -1536 1408 1792"><path fill="#fff" transform="scale(1,-1)" d="M384 224C384 241 369 256 352 256H288C271 256 256 241 256 224V160C256 143 271 128 288 128H352C369 128 384 143 384 160ZM384 480C384 497 369 512 352 512H288C271 512 256 497 256 480V416C256 399 271 384 288 384H352C369 384 384 399 384 416ZM640 480C640 497 625 512 608 512H544C527 512 512 497 512 480V416C512 399 527 384 544 384H608C625 384 640 399 640 416ZM384 736C384 753 369 768 352 768H288C271 768 256 753 256 736V672C256 655 271 640 288 640H352C369 640 384 655 384 672ZM1152 224C1152 241 1137 256 1120 256H1056C1039 256 1024 241 1024 224V160C1024 143 1039 128 1056 128H1120C1137 128 1152 143 1152 160ZM896 480C896 497 881 512 864 512H800C783 512 768 497 768 480V416C768 399 783 384 800 384H864C881 384 896 399 896 416ZM640 736C640 753 625 768 608 768H544C527 768 512 753 512 736V672C512 655 527 640 544 640H608C625 640 640 655 640 672ZM384 992C384 1009 369 1024 352 1024H288C271 1024 256 1009 256 992V928C256 911 271 896 288 896H352C369 896 384 911 384 928ZM1152 480C1152 497 1137 512 1120 512H1056C1039 512 1024 497 1024 480V416C1024 399 1039 384 1056 384H1120C1137 384 1152 399 1152 416ZM896 736C896 753 881 768 864 768H800C783 768 768 753 768 736V672C768 655 783 640 800 640H864C881 640 896 655 896 672ZM640 992C640 1009 625 1024 608 1024H544C527 1024 512 1009 512 992V928C512 911 527 896 544 896H608C625 896 640 911 640 928ZM384 1248C384 1265 369 1280 352 1280H288C271 1280 256 1265 256 1248V1184C256 1167 271 1152 288 1152H352C369 1152 384 1167 384 1184ZM1152 736C1152 753 1137 768 1120 768H1056C1039 768 1024 753 1024 736V672C1024 655 1039 640 1056 640H1120C1137 640 1152 655 1152 672ZM896 992C896 1009 881 1024 864 1024H800C783 1024 768 1009 768 992V928C768 911 783 896 800 896H864C881 896 896 911 896 928ZM640 1248C640 1265 625 1280 608 1280H544C527 1280 512 1265 512 1248V1184C512 1167 527 1152 544 1152H608C625 1152 640 1167 640 1184ZM1152 992C1152 1009 1137 1024 1120 1024H1056C1039 1024 1024 1009 1024 992V928C1024 911 1039 896 1056 896H1120C1137 896 1152 911 1152 928ZM896 1248C896 1265 881 1280 864 1280H800C783 1280 768 1265 768 1248V1184C768 1167 783 1152 800 1152H864C881 1152 896 1167 896 1184ZM1152 1248C1152 1265 1137 1280 1120 1280H1056C1039 1280 1024 1265 1024 1248V1184C1024 1167 1039 1152 1056 1152H1120C1137 1152 1152 1167 1152 1184ZM896 -128V96C896 113 881 128 864 128H544C527 128 512 113 512 96V-128H128V1408H1280V-128ZM1408 1472C1408 1507 1379 1536 1344 1536H64C29 1536 0 1507 0 1472V-192C0 -227 29 -256 64 -256H1344C1379 -256 1408 -227 1408 -192Z"/></svg>
<svg class="i" style="width:7.21px;height:20.20px;left:247.3px;top:883.48px" viewBox="0 -1536 640 1792"><path fill="#fff" transform="scale(1,-1)" d="M627 992C627 1001 623 1009 617 1015L567 1065C561 1071 552 1075 544 1075C536 1075 527 1071 521 1065L55 599C49 593 45 584 45 576C45 568 49 559 55 553L521 87C527 81 536 77 544 77C552 77 561 81 567 87L617 137C623 143 627 152 627 160C627 168 623 177 617 183L224 576L617 969C623 975 627 984 627 992Z"/></svg>
<span class="t" style="left:50.80px;top:940.57px;font-size:18.75px;color:#fff;letter-spacing:0.419px;">Certificate</span>
<svg class="i" style="width:21.43px;height:18.75px;left:16.7px;top:939.55px" viewBox="0 -1536 2048 1792"><path fill="#fff" transform="scale(1,-1)" d="M1024 1024V640H640V1024H1024ZM1152 384H512V256H1152ZM1152 1152H512V512H1152ZM1792 384H1280V256H1792ZM1792 640H1280V512H1792ZM1792 896H1280V768H1792ZM1792 1152H1280V1024H1792ZM256 192C256 157 227 128 192 128C157 128 128 157 128 192V1152H256V192ZM1920 192C1920 157 1891 128 1856 128H373C380 148 384 170 384 192V1280H1920V192ZM2048 1408H256V1280H0V192C0 86 86 0 192 0H1856C1962 0 2048 86 2048 192Z"/></svg>
<svg class="i" style="width:7.21px;height:20.20px;left:247.3px;top:939.85px" viewBox="0 -1536 640 1792"><path fill="#fff" transform="scale(1,-1)" d="M627 992C627 1001 623 1009 617 1015L567 1065C561 1071 552 1075 544 1075C536 1075 527 1071 521 1065L55 599C49 593 45 584 45 576C45 568 49 559 55 553L521 87C527 81 536 77 544 77C552 77 561 81 567 87L617 137C623 143 627 152 627 160C627 168 623 177 617 183L224 576L617 969C623 975 627 984 627 992Z"/></svg>
<div id="thumb" class="a"></div>
</div>
<div class="card s1" style="left:298px;top:80.5px;width:371px;height:77.3px">
<svg class="i" style="width:15.54px;height:14.50px;left:14px;top:20.9px" viewBox="0 -1536 1920 1792"><path fill="#222" transform="scale(1,-1)" d="M768 384V480H896V768H894C878 743 863 732 839 711L762 791L910 928H1024V480H1152V384ZM1280 640C1280 822 1170 1056 960 1056C750 1056 640 822 640 640C640 458 750 224 960 224C1170 224 1280 458 1280 640ZM1792 384C1651 384 1536 269 1536 128H384C384 269 269 384 128 384V896C269 896 384 1011 384 1152H1536C1536 1011 1651 896 1792 896V384ZM1920 1216C1920 1251 1891 1280 1856 1280H64C29 1280 0 1251 0 1216V64C0 29 29 0 64 0H1856C1891 0 1920 29 1920 64Z"/></svg>
<span class="t" style="left:37.70px;top:17.69px;font-size:18.2px;color:#1d1d1d;letter-spacing:0.055px;">FEES AWAITING PAYMENT</span>
<span class="t" style="left:327.00px;top:17.69px;font-size:18.2px;color:#1d1d1d;letter-spacing:2.102px;">0/0</span>
<div class="pb" style="left:14px;top:51px;width:342.5px"></div>
</div>
<div class="card s1" style="left:683.5px;top:80.5px;width:371px;height:77.3px">
<svg class="i" style="width:14.20px;height:14.20px;left:14px;top:20.3px" viewBox="0 -1536 1792 1792"><path fill="#222" transform="scale(1,-1)" d="M1303 572C1315 585 1315 605 1303 617L1257 663C1245 675 1225 675 1212 663L768 219L548 439C535 451 515 451 503 439L457 393C445 381 445 361 457 348L745 60C758 48 778 48 791 60L1303 572ZM128 -128V896H1536V-128ZM512 1088C512 1070 498 1056 480 1056H416C398 1056 384 1070 384 1088V1376C384 1394 398 1408 416 1408H480C498 1408 512 1394 512 1376V1088ZM1280 1088C1280 1070 1266 1056 1248 1056H1184C1166 1056 1152 1070 1152 1088V1376C1152 1394 1166 1408 1184 1408H1248C1266 1408 1280 1394 1280 1376V1088ZM1664 1152C1664 1222 1606 1280 1536 1280H1408V1376C1408 1464 1336 1536 1248 1536H1184C1096 1536 1024 1464 1024 1376V1280H640V1376C640 1464 568 1536 480 1536H416C328 1536 256 1464 256 1376V1280H128C58 1280 0 1222 0 1152V-128C0 -198 58 -256 128 -256H1536C1606 -256 1664 -198 1664 -128Z"/></svg>
<span class="t" style="left:36.50px;top:17.69px;font-size:18.2px;color:#1d1d1d;letter-spacing:-0.032px;">STAFF PRESENT TODAY</span>
<span class="t" style="left:316.00px;top:17.69px;font-size:18.2px;color:#1d1d1d;letter-spacing:1.698px;">0/28</span>
<div class="pb" style="left:14px;top:51px;width:342.5px"></div>
</div>
<div class="card s1" style="left:1069px;top:80.5px;width:371px;height:77.3px">
<svg class="i" style="width:14.20px;height:14.20px;left:14px;top:20.3px" viewBox="0 -1536 1792 1792"><path fill="#222" transform="scale(1,-1)" d="M1303 572C1315 585 1315 605 1303 617L1257 663C1245 675 1225 675 1212 663L768 219L548 439C535 451 515 451 503 439L457 393C445 381 445 361 457 348L745 60C758 48 778 48 791 60L1303 572ZM128 -128V896H1536V-128ZM512 1088C512 1070 498 1056 480 1056H416C398 1056 384 1070 384 1088V1376C384 1394 398 1408 416 1408H480C498 1408 512 1394 512 1376V1088ZM1280 1088C1280 1070 1266 1056 1248 1056H1184C1166 1056 1152 1070 1152 1088V1376C1152 1394 1166 1408 1184 1408H1248C1266 1408 1280 1394 1280 1376V1088ZM1664 1152C1664 1222 1606 1280 1536 1280H1408V1376C1408 1464 1336 1536 1248 1536H1184C1096 1536 1024 1464 1024 1376V1280H640V1376C640 1464 568 1536 480 1536H416C328 1536 256 1464 256 1376V1280H128C58 1280 0 1222 0 1152V-128C0 -198 58 -256 128 -256H1536C1606 -256 1664 -198 1664 -128Z"/></svg>
<span class="t" style="left:36.50px;top:17.69px;font-size:18.2px;color:#1d1d1d;letter-spacing:-0.120px;">STUDENT PRESENT TODAY</span>
<span class="t" style="left:305.00px;top:17.69px;font-size:18.2px;color:#1d1d1d;letter-spacing:1.496px;">0/765</span>
<div class="pb" style="left:14px;top:51px;width:342.5px"></div>
</div>
<div class="card s2" style="left:298px;top:171px;width:911px;height:340px;border-radius:3px"><span class="t" style="left:14.60px;top:14.08px;font-size:24px;color:#1d1d1d;letter-spacing:0.857px;">Fees Collection &amp; Expenses For March 2024</span><div class="hr" style="left:0;top:53px;width:100%"></div><svg class="a" style="left:0;top:0" width="911" height="340" viewBox="298 171 911 340"><path d="M340.10 250.3 V460.6 M332.2 254.7 H340.10 M332.2 455.30 H1194" stroke="#e9e9e9" stroke-width="1.25" fill="none"/><path d="M367.39 455.30 V460.6 M394.68 455.30 V460.6 M421.97 455.30 V460.6 M449.26 455.30 V460.6 M476.55 455.30 V460.6 M503.84 455.30 V460.6 M531.13 455.30 V460.6 M558.42 455.30 V460.6 M585.71 455.30 V460.6 M613.00 455.30 V460.6 M640.29 455.30 V460.6 M667.58 455.30 V460.6 M694.87 455.30 V460.6 M722.16 455.30 V460.6 M749.45 455.30 V460.6 M776.74 455.30 V460.6 M804.03 455.30 V460.6 M831.32 455.30 V460.6 M858.61 455.30 V460.6 M885.90 455.30 V460.6 M913.19 455.30 V460.6 M940.48 455.30 V460.6 M967.77 455.30 V460.6 M995.06 455.30 V460.6 M1022.35 455.30 V460.6 M1049.64 455.30 V460.6 M1076.93 455.30 V460.6 M1104.22 455.30 V460.6 M1131.51 455.30 V460.6 M1158.80 455.30 V460.6 " stroke="#e9e9e9" stroke-width="1.25" fill="none"/><rect x="345.80" y="454.05" width="5.9" height="2.6" rx="0.6" fill="#7ab030"/><rect x="353.00" y="454.05" width="5.9" height="2.6" rx="0.6" fill="#e6004f"/><rect x="373.14" y="454.05" width="5.9" height="2.6" rx="0.6" fill="#7ab030"/><rect x="380.34" y="454.05" width="5.9" height="2.6" rx="0.6" fill="#e6004f"/><rect x="400.49" y="454.05" width="5.9" height="2.6" rx="0.6" fill="#7ab030"/><rect x="407.69" y="454.05" width="5.9" height="2.6" rx="0.6" fill="#e6004f"/><rect x="427.83" y="454.05" width="5.9" height="2.6" rx="0.6" fill="#7ab030"/><rect x="435.03" y="454.05" width="5.9" height="2.6" rx="0.6" fill="#e6004f"/><rect x="455.17" y="454.05" width="5.9" height="2.6" rx="0.6" fill="#7ab030"/><rect x="462.37" y="454.05" width="5.9" height="2.6" rx="0.6" fill="#e6004f"/><rect x="482.51" y="454.05" width="5.9" height="2.6" rx="0.6" fill="#7ab030"/><rect x="489.72" y="454.05" width="5.9" height="2.6" rx="0.6" fill="#e6004f"/><rect x="509.86" y="454.05" width="5.9" height="2.6" rx="0.6" fill="#7ab030"/><rect x="517.06" y="454.05" width="5.9" height="2.6" rx="0.6" fill="#e6004f"/><rect x="537.20" y="454.05" width="5.9" height="2.6" rx="0.6" fill="#7ab030"/><rect x="544.40" y="454.05" width="5.9" height="2.6" rx="0.6" fill="#e6004f"/><rect x="564.54" y="454.05" width="5.9" height="2.6" rx="0.6" fill="#7ab030"/><rect x="571.74" y="454.05" width="5.9" height="2.6" rx="0.6" fill="#e6004f"/><rect x="591.89" y="454.05" width="5.9" height="2.6" rx="0.6" fill="#7ab030"/><rect x="599.09" y="454.05" width="5.9" height="2.6" rx="0.6" fill="#e6004f"/><rect x="619.23" y="454.05" width="5.9" height="2.6" rx="0.6" fill="#7ab030"/><rect x="626.43" y="454.05" width="5.9" height="2.6" rx="0.6" fill="#e6004f"/><rect x="646.57" y="454.05" width="5.9" height="2.6" rx="0.6" fill="#7ab030"/><rect x="653.77" y="454.05" width="5.9" height="2.6" rx="0.6" fill="#e6004f"/><rect x="673.92" y="454.05" width="5.9" height="2.6" rx="0.6" fill="#7ab030"/><rect x="681.12" y="454.05" width="5.9" height="2.6" rx="0.6" fill="#e6004f"/><rect x="701.26" y="454.05" width="5.9" height="2.6" rx="0.6" fill="#7ab030"/><rect x="708.46" y="454.05" width="5.9" height="2.6" rx="0.6" fill="#e6004f"/><rect x="728.60" y="454.05" width="5.9" height="2.6" rx="0.6" fill="#7ab030"/><rect x="735.80" y="454.05" width="5.9" height="2.6" rx="0.6" fill="#e6004f"/><rect x="755.94" y="454.05" width="5.9" height="2.6" rx="0.6" fill="#7ab030"/><rect x="763.14" y="454.05" width="5.9" height="2.6" rx="0.6" fill="#e6004f"/><rect x="783.29" y="454.05" width="5.9" height="2.6" rx="0.6" fill="#7ab030"/><rect x="790.49" y="454.05" width="5.9" height="2.6" rx="0.6" fill="#e6004f"/><rect x="810.63" y="454.05" width="5.9" height="2.6" rx="0.6" fill="#7ab030"/><rect x="817.83" y="454.05" width="5.9" height="2.6" rx="0.6" fill="#e6004f"/><rect x="837.97" y="454.05" width="5.9" height="2.6" rx="0.6" fill="#7ab030"/><rect x="845.17" y="454.05" width="5.9" height="2.6" rx="0.6" fill="#e6004f"/><rect x="865.32" y="454.05" width="5.9" height="2.6" rx="0.6" fill="#7ab030"/><rect x="872.52" y="454.05" width="5.9" height="2.6" rx="0.6" fill="#e6004f"/><rect x="892.66" y="454.05" width="5.9" height="2.6" rx="0.6" fill="#7ab030"/><rect x="899.86" y="454.05" width="5.9" height="2.6" rx="0.6" fill="#e6004f"/><rect x="920.00" y="454.05" width="5.9" height="2.6" rx="0.6" fill="#7ab030"/><rect x="927.20" y="454.05" width="5.9" height="2.6" rx="0.6" fill="#e6004f"/><rect x="947.35" y="454.05" width="5.9" height="2.6" rx="0.6" fill="#7ab030"/><rect x="954.55" y="454.05" width="5.9" height="2.6" rx="0.6" fill="#e6004f"/><rect x="974.69" y="454.05" width="5.9" height="2.6" rx="0.6" fill="#7ab030"/><rect x="981.89" y="454.05" width="5.9" height="2.6" rx="0.6" fill="#e6004f"/><rect x="1002.03" y="454.05" width="5.9" height="2.6" rx="0.6" fill="#7ab030"/><rect x="1009.23" y="454.05" width="5.9" height="2.6" rx="0.6" fill="#e6004f"/><rect x="1029.38" y="454.05" width="5.9" height="2.6" rx="0.6" fill="#7ab030"/><rect x="1036.58" y="454.05" width="5.9" height="2.6" rx="0.6" fill="#e6004f"/><rect x="1056.72" y="454.05" width="5.9" height="2.6" rx="0.6" fill="#7ab030"/><rect x="1063.92" y="454.05" width="5.9" height="2.6" rx="0.6" fill="#e6004f"/><rect x="1084.06" y="454.05" width="5.9" height="2.6" rx="0.6" fill="#7ab030"/><rect x="1091.26" y="454.05" width="5.9" height="2.6" rx="0.6" fill="#e6004f"/><rect x="1111.40" y="454.05" width="5.9" height="2.6" rx="0.6" fill="#7ab030"/><rect x="1118.60" y="454.05" width="5.9" height="2.6" rx="0.6" fill="#e6004f"/><rect x="1138.75" y="454.05" width="5.9" height="2.6" rx="0.6" fill="#7ab030"/><rect x="1145.95" y="454.05" width="5.9" height="2.6" rx="0.6" fill="#e6004f"/><rect x="1166.09" y="454.05" width="5.9" height="2.6" rx="0.6" fill="#7ab030"/><rect x="1173.29" y="454.05" width="5.9" height="2.6" rx="0.6" fill="#e6004f"/><g font-size="15.5" fill="#5f5f5f" letter-spacing="0.3"><text x="325.2" y="259.1" text-anchor="end">1</text><text x="325.2" y="459.8" text-anchor="end">0</text><text text-anchor="end" y="5.5" transform="translate(351.35,468.9) rotate(-17)">01</text><text text-anchor="end" y="5.5" transform="translate(378.68,468.9) rotate(-17)">02</text><text text-anchor="end" y="5.5" transform="translate(406.02,468.9) rotate(-17)">03</text><text text-anchor="end" y="5.5" transform="translate(433.36,468.9) rotate(-17)">04</text><text text-anchor="end" y="5.5" transform="translate(460.70,468.9) rotate(-17)">05</text><text text-anchor="end" y="5.5" transform="translate(488.04,468.9) rotate(-17)">06</text><text text-anchor="end" y="5.5" transform="translate(515.37,468.9) rotate(-17)">07</text><text text-anchor="end" y="5.5" transform="translate(542.71,468.9) rotate(-17)">08</text><text text-anchor="end" y="5.5" transform="translate(570.05,468.9) rotate(-17)">09</text><text text-anchor="end" y="5.5" transform="translate(597.39,468.9) rotate(-17)">10</text><text text-anchor="end" y="5.5" transform="translate(624.73,468.9) rotate(-17)">11</text><text text-anchor="end" y="5.5" transform="translate(652.06,468.9) rotate(-17)">12</text><text text-anchor="end" y="5.5" transform="translate(679.40,468.9) rotate(-17)">13</text><text text-anchor="end" y="5.5" transform="translate(706.74,468.9) rotate(-17)">14</text><text text-anchor="end" y="5.5" transform="translate(734.08,468.9) rotate(-17)">15</text><text text-anchor="end" y="5.5" transform="translate(761.41,468.9) rotate(-17)">16</text><text text-anchor="end" y="5.5" transform="translate(788.75,468.9) rotate(-17)">17</text><text text-anchor="end" y="5.5" transform="translate(816.09,468.9) rotate(-17)">18</text><text text-anchor="end" y="5.5" transform="translate(843.43,468.9) rotate(-17)">19</text><text text-anchor="end" y="5.5" transform="translate(870.77,468.9) rotate(-17)">20</text><text text-anchor="end" y="5.5" transform="translate(898.11,468.9) rotate(-17)">21</text><text text-anchor="end" y="5.5" transform="translate(925.44,468.9) rotate(-17)">22</text><text text-anchor="end" y="5.5" transform="translate(952.78,468.9) rotate(-17)">23</text><text text-anchor="end" y="5.5" transform="translate(980.12,468.9) rotate(-17)">24</text><text text-anchor="end" y="5.5" transform="translate(1007.46,468.9) rotate(-17)">25</text><text text-anchor="end" y="5.5" transform="translate(1034.80,468.9) rotate(-17)">26</text><text text-anchor="end" y="5.5" transform="translate(1062.13,468.9) rotate(-17)">27</text><text text-anchor="end" y="5.5" transform="translate(1089.47,468.9) rotate(-17)">28</text><text text-anchor="end" y="5.5" transform="translate(1116.81,468.9) rotate(-17)">29</text><text text-anchor="end" y="5.5" transform="translate(1144.15,468.9) rotate(-17)">30</text><text text-anchor="end" y="5.5" transform="translate(1171.49,468.9) rotate(-17)">31</text></g></svg></div>
<div class="card s2" style="left:1223px;top:171px;width:603px;height:337px;border-radius:3px"><span class="t" style="left:14.60px;top:14.08px;font-size:24px;color:#1d1d1d;letter-spacing:1.012px;">Income - March 2024</span><div class="hr" style="left:0;top:53px;width:100%"></div></div>
<div class="card s2" style="left:298px;top:525px;width:911px;height:340px;border-radius:3px"><span class="t" style="left:14.60px;top:14.08px;font-size:24px;color:#1d1d1d;letter-spacing:0.808px;">Fees Collection &amp; Expenses For Session 2023-24</span><div class="hr" style="left:0;top:53px;width:100%"></div><svg class="a" style="left:0;top:0" width="911" height="340" viewBox="298 525 911 340"><path d="M364.60 604.4 V769.4 M356.6 608.7 H364.60 M356.6 685.9 H364.60 M356.6 763.10 H1194" stroke="#e9e9e9" stroke-width="1.25" fill="none"/><path d="M439.30 763.10 V769.4 M514.00 763.10 V769.4 M588.70 763.10 V769.4 M663.40 763.10 V769.4 M738.10 763.10 V769.4 M812.80 763.10 V769.4 M887.50 763.10 V769.4 M962.20 763.10 V769.4 M1036.90 763.10 V769.4 M1111.60 763.10 V769.4 M1186.30 763.10 V769.4 " stroke="#e9e9e9" stroke-width="1.25" fill="none"/><path d="M364.60 763.1 H514.00" stroke="#dc3c50" stroke-width="2.6" fill="none"/><path d="M514.00 763.1 H1186.30" stroke="#7f7a12" stroke-width="2.6" fill="none"/><path d="M364.60 763.1 C370.70 751.5 412.70 609.1 439.30 609.1 C463.80 609.1 476.20 727.9 514.00 763.1" stroke="#8cc04c" stroke-width="2.6" fill="none" stroke-linecap="round"/><g font-size="16" fill="#5f5f5f" letter-spacing="0.7"><text x="350.2" y="613.4" text-anchor="end">10</text><text x="350.2" y="690.6" text-anchor="end">5</text><text x="350.2" y="768.1" text-anchor="end">0</text><text text-anchor="end" y="5.5" transform="translate(364.60,778.2) rotate(-36)">August</text><text text-anchor="end" y="5.5" transform="translate(439.30,778.2) rotate(-36)">September</text><text text-anchor="end" y="5.5" transform="translate(514.00,778.2) rotate(-36)">October</text><text text-anchor="end" y="5.5" transform="translate(588.70,778.2) rotate(-36)">November</text><text text-anchor="end" y="5.5" transform="translate(663.40,778.2) rotate(-36)">December</text><text text-anchor="end" y="5.5" transform="translate(738.10,778.2) rotate(-36)">January</text><text text-anchor="end" y="5.5" transform="translate(812.80,778.2) rotate(-36)">February</text><text text-anchor="end" y="5.5" transform="translate(887.50,778.2) rotate(-36)">March</text><text text-anchor="end" y="5.5" transform="translate(962.20,778.2) rotate(-36)">April</text><text text-anchor="end" y="5.5" transform="translate(1036.90,778.2) rotate(-36)">May</text><text text-anchor="end" y="5.5" transform="translate(1111.60,778.2) rotate(-36)">June</text><text text-anchor="end" y="5.5" transform="translate(1186.30,778.2) rotate(-36)">July</text></g></svg></div>
<div class="card s2" style="left:1223px;top:525px;width:603px;height:336.5px;border-radius:3px"><span class="t" style="left:14.60px;top:14.08px;font-size:24px;color:#1d1d1d;letter-spacing:0.844px;">Expense - March 2024</span><div class="hr" style="left:0;top:53px;width:100%"></div></div>
<div class="card s1" style="left:298px;top:879px;width:371px;height:200px">
<span class="t" style="left:14.50px;top:20.59px;font-size:18.2px;color:#1d1d1d;letter-spacing:0.767px;">Fees Overview</span>
<div class="hr" style="left:14px;top:59.5px;width:342.5px;height:1.5px;background:#eee"></div>
<span class="t" style="left:14.50px;top:91.28px;font-size:17.5px;color:#1d1d1d;letter-spacing:0.511px;">0 UNPAID</span>
<span class="t" style="left:332.00px;top:91.28px;font-size:17.5px;color:#1d1d1d;letter-spacing:-0.797px;">0%</span>
<div class="pb" style="left:14px;top:125.3px;width:342.5px"></div>
<span class="t" style="left:14.50px;top:149.28px;font-size:17.5px;color:#1d1d1d;letter-spacing:0.572px;">0 PARTIAL</span>
<span class="t" style="left:332.00px;top:149.28px;font-size:17.5px;color:#1d1d1d;letter-spacing:-0.797px;">0%</span>
</div>
<div class="card s1" style="left:683.5px;top:879px;width:371px;height:200px">
<span class="t" style="left:14.50px;top:20.59px;font-size:18.2px;color:#1d1d1d;letter-spacing:0.936px;">Library Overview</span>
<div class="hr" style="left:14px;top:59.5px;width:342.5px;height:1.5px;background:#eee"></div>
<span class="t" style="left:14.50px;top:91.28px;font-size:17.5px;color:#1d1d1d;letter-spacing:0.158px;">0 DUE FOR RETURN</span>
<div class="pb" style="left:14px;top:125.3px;width:342.5px"></div>
<span class="t" style="left:14.50px;top:149.28px;font-size:17.5px;color:#1d1d1d;letter-spacing:0.241px;">0 RETURNED</span>
</div>
<div class="card s1" style="left:1069px;top:879px;width:371px;height:200px">
<span class="t" style="left:14.50px;top:20.59px;font-size:18.2px;color:#1d1d1d;letter-spacing:1.260px;">Student Today Attendance</span>
<div class="hr" style="left:14px;top:59.5px;width:342.5px;height:1.5px;background:#eee"></div>
<span class="t" style="left:14.50px;top:91.28px;font-size:17.5px;color:#1d1d1d;letter-spacing:0.224px;">PRESENT</span>
<div class="pb" style="left:14px;top:125.3px;width:342.5px"></div>
<span class="t" style="left:14.50px;top:149.28px;font-size:17.5px;color:#1d1d1d;letter-spacing:1.010px;">LATE</span>
</div>
</div>
</body></html>
